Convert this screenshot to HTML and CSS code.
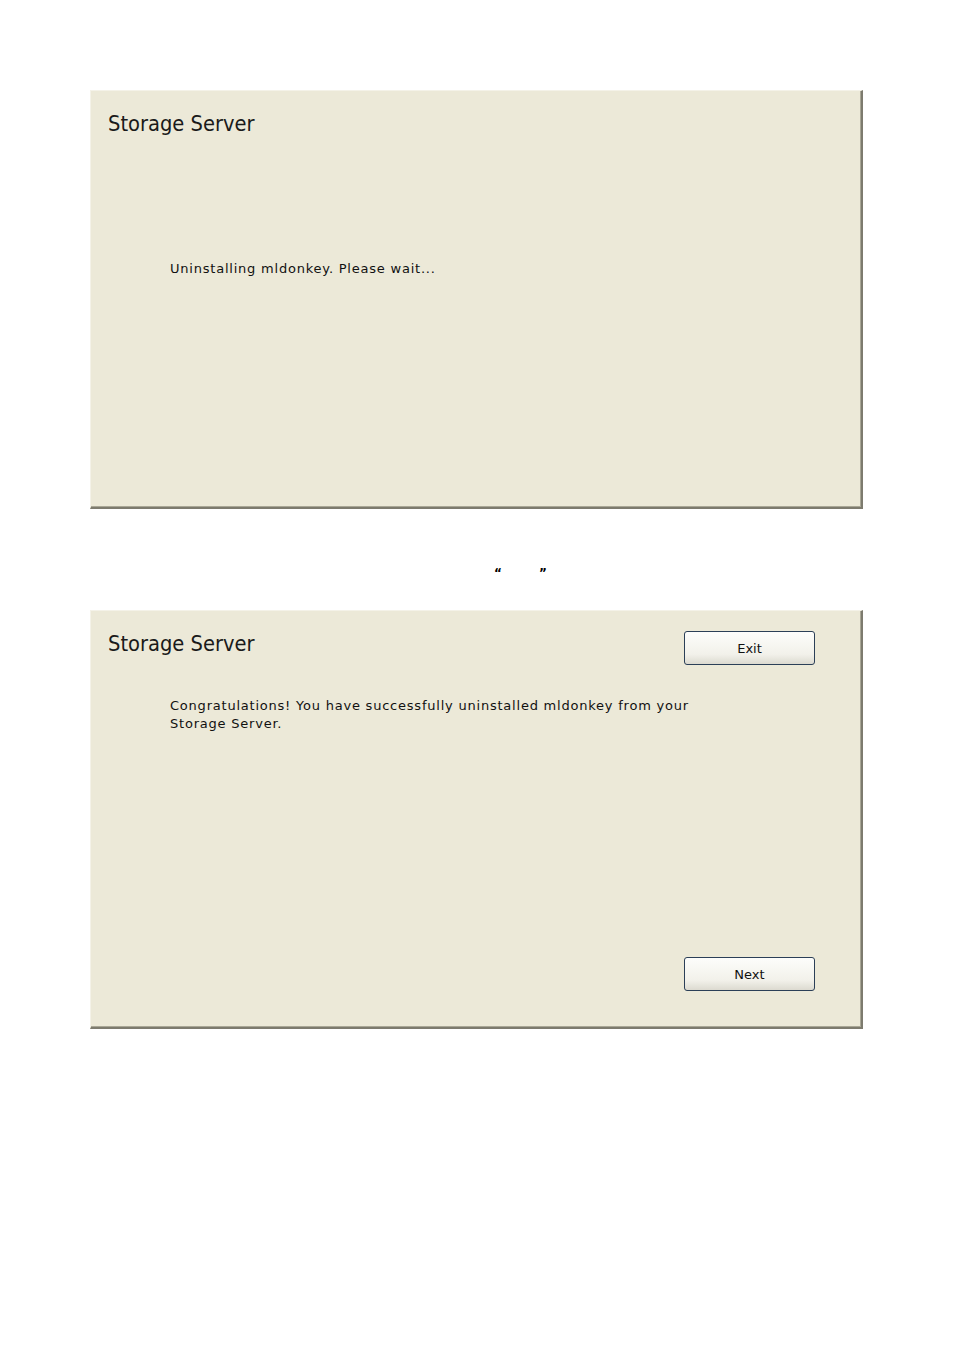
FILE: index.html
```html
<!DOCTYPE html>
<html>
<head>
<meta charset="utf-8">
<link rel="stylesheet" href="styles.css">
</head>
<body>
<div class="page">
  <div class="panel">
    <div class="header">
      <div class="title">Storage Server</div>
    </div>
    <div class="msg msg-wait">Uninstalling mldonkey. Please wait...</div>
  </div>

  <div class="caption"><span>“</span><span>”</span></div>

  <div class="panel">
    <div class="header">
      <div class="title">Storage Server</div>
      <button class="btn">Exit</button>
    </div>
    <div class="msg msg-done">Congratulations! You have successfully uninstalled mldonkey from your<br>Storage Server.</div>
    <div class="spacer"></div>
    <div class="footer">
      <button class="btn">Next</button>
    </div>
  </div>
</div>
</body>
</html>
```

FILE: styles.css
```css
html, body {
  margin: 0;
  padding: 0;
  background: #ffffff;
}
.page {
  padding-top: 90px;
  padding-left: 90px;
  width: 773px;
  display: flex;
  flex-direction: column;
}
.panel {
  box-sizing: border-box;
  width: 773px;
  height: 419px;
  background: #ece9d8;
  border-top: 1px solid #f4f2e8;
  border-left: 1px solid #f4f2e8;
  border-right: 2px solid #7d7b6e;
  border-bottom: 2px solid #7d7b6e;
  box-shadow: inset -1px -1px 0 #a9a796;
  display: flex;
  flex-direction: column;
  padding: 19px 46px 36px 17px;
}
.header {
  display: flex;
  justify-content: space-between;
  align-items: flex-start;
  height: 40px;
}
.title {
  font-family: "DejaVu Sans Condensed", "DejaVu Sans", sans-serif;
  font-size: 21.7px;
  color: #1a1a1a;
  line-height: 28px;
}
.msg {
  font-family: "DejaVu Sans", Verdana, sans-serif;
  font-size: 13px;
  line-height: 18px;
  color: #111;
  margin-left: 62px;
  letter-spacing: 0.78px;
}
.msg-wait {
  margin-top: 110px;
}
.msg-done {
  margin-top: 27px;
}
.spacer {
  flex: 1;
}
.footer {
  display: flex;
  justify-content: flex-end;
}
.btn {
  box-sizing: border-box;
  width: 131px;
  height: 34px;
  border: 1px solid #2b3f57;
  border-radius: 3px;
  background: linear-gradient(#fdfdfb, #f2f1ea 70%, #dcdad0);
  font-family: "DejaVu Sans", Verdana, sans-serif;
  font-size: 13px;
  color: #111;
  padding: 0;
  margin-top: 1px;
}
.caption {
  height: 101px;
  display: flex;
  gap: 37px;
  padding-left: 404px;
  align-items: flex-start;
  font-family: "DejaVu Sans", sans-serif;
  font-size: 12px;
  font-weight: bold;
  color: #000;
  box-sizing: border-box;
  padding-top: 57px;
}
```
